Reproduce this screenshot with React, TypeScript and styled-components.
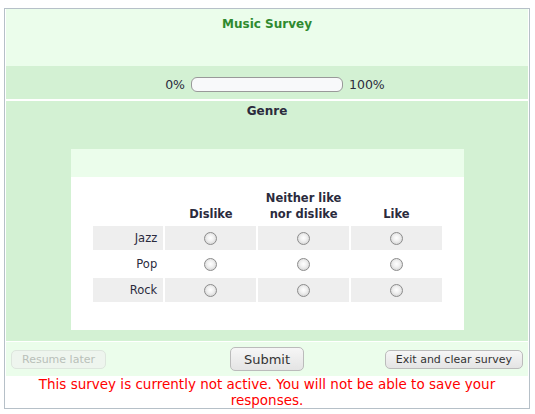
import React from "react";
import styled, { createGlobalStyle } from "styled-components";

const GlobalStyle = createGlobalStyle`
  html, body {
    margin: 0;
    padding: 0;
    background: #ffffff;
  }
  body {
    padding: 8px 5px 0 4px;
    font-family: "DejaVu Sans", Verdana, sans-serif;
    color: #2b2b3d;
  }
`;

const Survey = styled.div`
  border: 1px solid #b6c0c8;
  padding: 0 1px;
  background: #ffffff;
`;

const Header = styled.div`
  background: #ebfdeb;
  height: 57px;
  padding-top: 7px;
  box-sizing: border-box;
  text-align: center;
  font-size: 12px;
  font-weight: bold;
  line-height: 16px;
  color: #2f8a2f;
`;

const ProgressRow = styled.div`
  background: #d3f1d3;
  height: 33px;
  display: grid;
  grid-template-columns: 1fr auto 1fr;
  align-items: center;
  column-gap: 6px;
  padding-top: 3px;
  box-sizing: border-box;
  font-size: 12.5px;
  margin-bottom: 2px;
`;

const Percent = styled.span<{ $end?: boolean }>`
  justify-self: ${(p) => (p.$end ? "end" : "start")};
`;

const ProgressBar = styled.div`
  width: 150px;
  height: 13px;
  border: 1px solid #999999;
  border-radius: 6px;
  background: #f8f9fa;
`;

const GenreSection = styled.div`
  background: #d3f1d3;
  padding: 2px 0 11px;
  margin-bottom: 1px;
`;

const QuestionTitle = styled.div`
  text-align: center;
  font-size: 12px;
  font-weight: bold;
  line-height: 16px;
`;

const QuestionBox = styled.div`
  margin: 30px 64px 0 65px;
  background: #ffffff;
`;

const QuestionHelp = styled.div`
  background: #ebfdeb;
  height: 28px;
`;

const Grid = styled.table`
  width: 100%;
  border-collapse: separate;
  border-spacing: 2px;
  padding: 11px 20px 26px;
  font-size: 11.5px;
`;

const HeadCell = styled.th<{ $w?: number }>`
  width: ${(p) => (p.$w ? `${p.$w}px` : "auto")};
  vertical-align: bottom;
  text-align: center;
  font-weight: bold;
  line-height: 16px;
  padding: 0 0 2px;
`;

const Row = styled.tr<{ $odd: boolean }>`
  height: 24px;
  td {
    background: ${(p) => (p.$odd ? "#eeeeee" : "transparent")};
  }
`;

const Label = styled.td`
  text-align: right;
  padding: 0 6px 0 0;
  line-height: 16px;
`;

const Choice = styled.td`
  text-align: center;
  padding: 0;
`;

const Radio = styled.input`
  appearance: none;
  width: 13px;
  height: 13px;
  margin: 3px 0 0;
  border-radius: 50%;
  border: 1px solid #8c8c8c;
  background: radial-gradient(circle at 50% 45%, #ffffff 0%, #f0f0f0 40%, #c9c9c9 100%);
  box-sizing: border-box;
`;

const Footer = styled.div`
  background: #ebfdeb;
  height: 34px;
  display: grid;
  grid-template-columns: 1fr auto 1fr;
  align-items: center;
  padding: 0 5px;
`;

const Button = styled.button<{ $big?: boolean; $disabled?: boolean }>`
  justify-self: ${(p) => (p.$big ? "center" : "start")};
  font-family: "DejaVu Sans", Verdana, sans-serif;
  font-size: ${(p) => (p.$big ? "13px" : "11px")};
  height: ${(p) => (p.$big ? "24px" : "19px")};
  padding: ${(p) => (p.$big ? "0 13px" : "0 10px")};
  border-radius: 5px;
  border: 1px solid ${(p) => (p.$disabled ? "#dde6dd" : "#bbbbbb")};
  color: ${(p) => (p.$disabled ? "#b9c0b9" : "#333333")};
  background: ${(p) =>
    p.$disabled
      ? "#eef5ee"
      : "linear-gradient(#f6f6f6, #e4e4e4)"};
  &:last-child {
    justify-self: end;
  }
`;

const Notice = styled.div`
  text-align: center;
  color: #ff0000;
  font-size: 13.5px;
  line-height: 16px;
  padding: 0 20px;
`;

const rows = ["Jazz", "Pop", "Rock"];

export default function App() {
  return (
    <>
      <GlobalStyle />
      <Survey>
        <Header>Music Survey</Header>
        <ProgressRow>
          <Percent $end>0%</Percent>
          <ProgressBar />
          <Percent>100%</Percent>
        </ProgressRow>
        <GenreSection>
          <QuestionTitle>Genre</QuestionTitle>
          <QuestionBox>
            <QuestionHelp />
            <Grid>
              <thead>
                <tr>
                  <HeadCell $w={70} />
                  <HeadCell $w={91}>Dislike</HeadCell>
                  <HeadCell $w={90}>
                    Neither like
                    <br />
                    nor dislike
                  </HeadCell>
                  <HeadCell $w={91}>Like</HeadCell>
                </tr>
              </thead>
              <tbody>
                {rows.map((r, i) => (
                  <Row key={r} $odd={i % 2 === 0}>
                    <Label>{r}</Label>
                    {[0, 1, 2].map((c) => (
                      <Choice key={c}>
                        <Radio type="radio" name={r} />
                      </Choice>
                    ))}
                  </Row>
                ))}
              </tbody>
            </Grid>
          </QuestionBox>
        </GenreSection>
        <Footer>
          <Button $disabled disabled>
            Resume later
          </Button>
          <Button $big>Submit</Button>
          <Button>Exit and clear survey</Button>
        </Footer>
        <Notice>
          This survey is currently not active. You will not be able to save your
          responses.
        </Notice>
      </Survey>
    </>
  );
}
